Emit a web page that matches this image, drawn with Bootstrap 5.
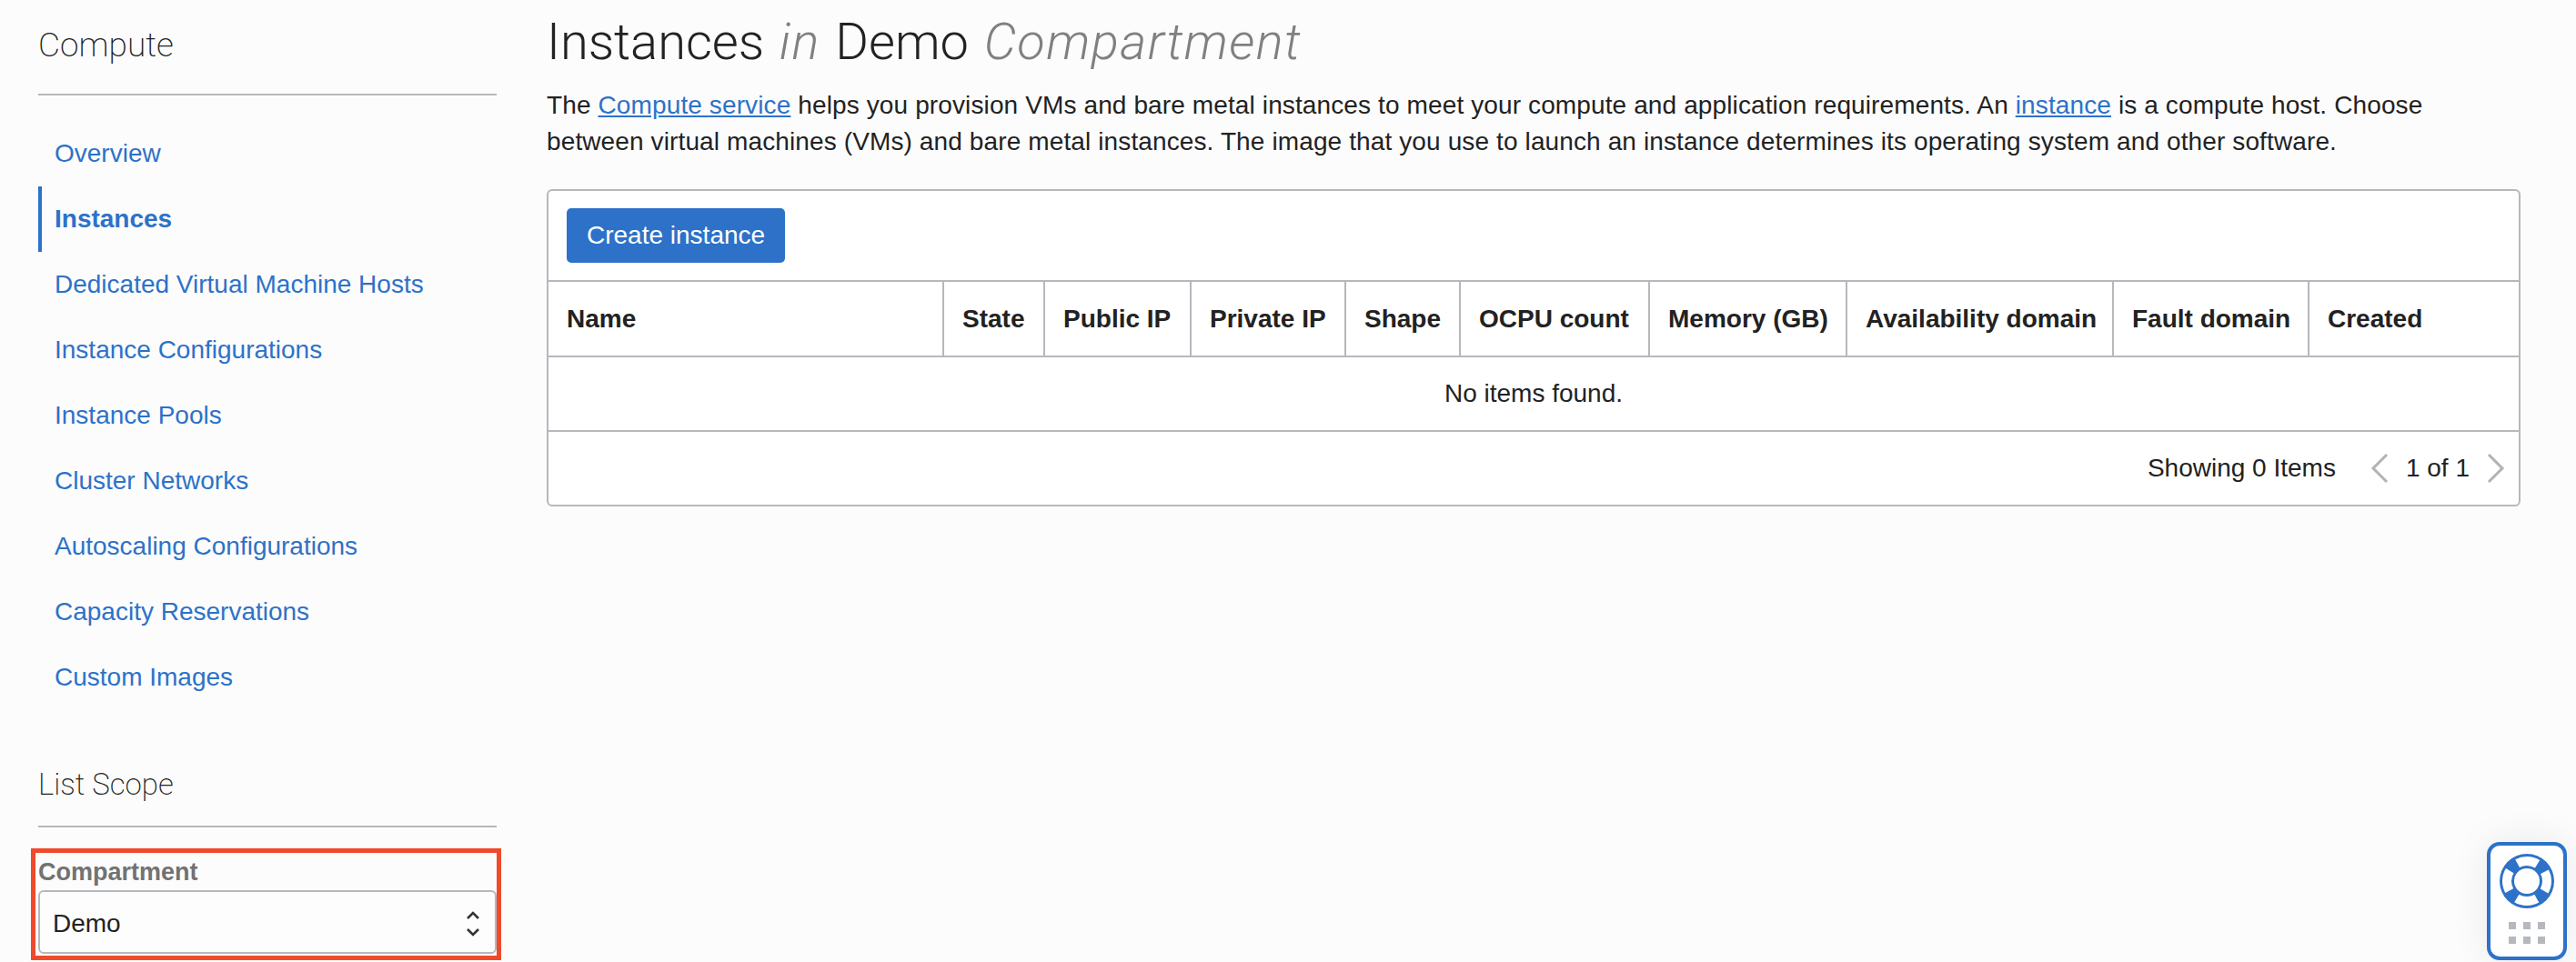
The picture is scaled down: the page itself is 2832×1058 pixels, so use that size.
<!DOCTYPE html>
<html lang="en">
<head>
  <meta charset="UTF-8" />
  <title>Instances in Demo Compartment</title>
  <link href="https://cdn.jsdelivr.net/npm/bootstrap@5.3.0/dist/css/bootstrap.min.css" rel="stylesheet">
  <style>
    body {
      background: #fcfcfc;
      color: #222;
      font-family: "Liberation Sans", Arial, sans-serif;
      font-size: 28px;
      line-height: 40px;
      height: 1058px;
      overflow: hidden;
    }

    a { color: #2d72c8; }

    .shell { height: 1058px; }

    .side-col {
      width: 504px;
      margin-left: 42px;
      flex: none;
    }

    .side-title {
      font-family: Roboto, "Liberation Sans", sans-serif;
      font-weight: 200;
      font-size: 37px;
      line-height: 44px;
      margin: 0;
      color: #222;
    }

    .compute-head { padding-top: 28px; padding-bottom: 31px; border-bottom: 2px solid #b5b8bd; }
    .scope-head { padding-bottom: 23px; border-bottom: 2px solid #b5b8bd; }
    .scope-head .side-title { font-size: 33px; }

    .side-nav { padding-top: 28px; padding-bottom: 60px; }
    .side-nav .nav-link {
      color: #2d72c8;
      height: 72px;
      line-height: 72px;
      padding: 0 0 0 18px;
      font-size: 28px;
    }
    .side-nav .nav-link.active {
      font-weight: 700;
      border-left: 4px solid #2d72c8;
      padding-left: 14px;
    }

    .scope-box {
      border: 5px solid #f04a2c;
      margin: 23px -5px 0 -8px;
      padding: 0 0 2px 3px;
    }
    .scope-box label {
      display: block;
      color: #727272;
      font-weight: 700;
      font-size: 27px;
      line-height: 36px;
      margin: 3px 0 2px;
    }
    .scope-select {
      height: 70px;
      border: 2px solid #b5b8bd;
      border-radius: 6px;
      padding: 3px 16px 0 14px;
      background: #fdfdfd;
      color: #222;
    }

    .main-col { margin-left: 55px; width: 2170px; flex: none; }

    .page-title {
      font-family: Roboto, "Liberation Sans", sans-serif;
      font-weight: 300;
      font-size: 56px;
      line-height: 64px;
      margin: 14px 0 0;
      color: #222;
      word-spacing: 3px;
    }
    .page-title em { color: #808080; letter-spacing: 1.4px; }

    .intro { margin: 18px 60px 0 0; font-size: 28px; line-height: 40px; letter-spacing: .12px; }
    .intro a { color: #2d72c8; }

    .list-card {
      margin-top: 32px;
      background: #fff;
      border: 2px solid #b5b8bd;
      border-radius: 6px;
      overflow: hidden;
    }

    .list-bar { height: 100px; padding: 19px 20px; border-bottom: 2px solid #b5b8bd; }

    .btn-make {
      background: #2d72c8;
      border: 0;
      border-radius: 5px;
      color: #fff;
      font-size: 28px;
      line-height: 40px;
      height: 60px;
      padding: 10px 22px;
    }

    .list-table { table-layout: fixed; margin: 0; width: 100%; --bs-table-bg: transparent; color: #222; }
    .list-table th {
      height: 82px;
      padding: 0 20px;
      vertical-align: middle;
      font-weight: 700;
      white-space: nowrap;
      border-bottom: 2px solid #b5b8bd;
      border-right: 2px solid #b5b8bd;
      color: #222;
    }
    .list-table th:last-child { border-right: 0; }
    .list-table td {
      height: 82px;
      padding: 0;
      text-align: center;
      vertical-align: middle;
      border-bottom: 2px solid #b5b8bd;
      color: #222;
    }

    .w-name { width: 434px; }
    .w-state { width: 111px; }
    .w-public { width: 161px; }
    .w-private { width: 170px; }
    .w-shape { width: 126px; }
    .w-ocpu { width: 208px; }
    .w-memory { width: 217px; }
    .w-avail { width: 293px; }
    .w-fault { width: 215px; }

    .list-foot { height: 80px; padding-right: 15px; }
    .pager-arrow { width: 20px; height: 34px; display: block; }
    .pager-back { margin-left: 38px; }
    .pager-text { margin: 0 19px; }

    .help-tab {
      position: fixed;
      left: 2734px;
      top: 926px;
      width: 88px;
      height: 130px;
      background: #fff;
      border: 4px solid #2d72c8;
      border-radius: 14px;
      box-shadow: 0 0 40px rgba(0, 0, 0, .08);
    }
    .help-tab svg { display: block; }
  </style>
</head>
<body>
  <div class="shell d-flex">
    <div class="side-col d-flex flex-column">
      <div class="compute-head"><h2 class="side-title">Compute</h2></div>
      <nav class="side-nav nav flex-column">
        <a class="nav-link" href="#">Overview</a>
        <a class="nav-link active" href="#">Instances</a>
        <a class="nav-link" href="#">Dedicated Virtual Machine Hosts</a>
        <a class="nav-link" href="#">Instance Configurations</a>
        <a class="nav-link" href="#">Instance Pools</a>
        <a class="nav-link" href="#">Cluster Networks</a>
        <a class="nav-link" href="#">Autoscaling Configurations</a>
        <a class="nav-link" href="#">Capacity Reservations</a>
        <a class="nav-link" href="#">Custom Images</a>
      </nav>
      <div class="scope-head"><h2 class="side-title">List Scope</h2></div>
      <div class="scope-box">
        <label>Compartment</label>
        <div class="scope-select d-flex align-items-center justify-content-between">
          <span>Demo</span>
          <svg width="16" height="30" viewBox="0 0 16 30" fill="none" stroke="#333" stroke-width="2.6"><path d="M2 9l6-6 6 6"/><path d="M2 21l6 6 6-6"/></svg>
        </div>
      </div>
    </div>

    <div class="main-col">
      <h1 class="page-title">Instances <em>in</em> Demo <em>Compartment</em></h1>
      <p class="intro">The <a href="#">Compute service</a> helps you provision VMs and bare metal instances to meet your compute and application requirements. An <a href="#">instance</a> is a compute host. Choose between virtual machines (VMs) and bare metal instances. The image that you use to launch an instance determines its operating system and other software.</p>
      <div class="list-card">
        <div class="list-bar"><button class="btn btn-make" type="button">Create instance</button></div>
        <table class="table list-table">
          <colgroup>
            <col class="w-name"><col class="w-state"><col class="w-public"><col class="w-private"><col class="w-shape"><col class="w-ocpu"><col class="w-memory"><col class="w-avail"><col class="w-fault"><col>
          </colgroup>
          <thead>
            <tr><th>Name</th><th>State</th><th>Public IP</th><th>Private IP</th><th>Shape</th><th>OCPU count</th><th>Memory (GB)</th><th>Availability domain</th><th>Fault domain</th><th>Created</th></tr>
          </thead>
          <tbody>
            <tr><td colspan="10">No items found.</td></tr>
          </tbody>
        </table>
        <div class="list-foot d-flex align-items-center justify-content-end">
          <span>Showing 0 Items</span>
          <svg class="pager-arrow pager-back" viewBox="0 0 20 34" fill="none" stroke="#b3b3b3" stroke-width="3"><path d="M18 2L3 17l15 15"/></svg>
          <span class="pager-text">1 of 1</span>
          <svg class="pager-arrow" viewBox="0 0 20 34" fill="none" stroke="#b3b3b3" stroke-width="3"><path d="M2 2l15 15L2 32"/></svg>
        </div>
      </div>
    </div>
  </div>

  <div class="help-tab">
    <svg width="80" height="122" viewBox="0 0 80 122">
      <circle cx="40" cy="39" r="30" fill="#2d72c8"/>
      <circle cx="40" cy="39" r="22" fill="none" stroke="#fff" stroke-width="10" stroke-dasharray="23 11.56" stroke-dashoffset="11.5"/>
      <circle cx="40" cy="39" r="14" fill="#fff"/>
      <g fill="#b5b8bd">
        <rect x="20" y="84" width="8" height="8"/><rect x="36" y="84" width="8" height="8"/><rect x="52" y="84" width="8" height="8"/>
        <rect x="20" y="100" width="8" height="8"/><rect x="36" y="100" width="8" height="8"/><rect x="52" y="100" width="8" height="8"/>
      </g>
    </svg>
  </div>

  <script src="https://cdn.jsdelivr.net/npm/bootstrap@5.3.0/dist/js/bootstrap.bundle.min.js"></script>
</body>
</html>
